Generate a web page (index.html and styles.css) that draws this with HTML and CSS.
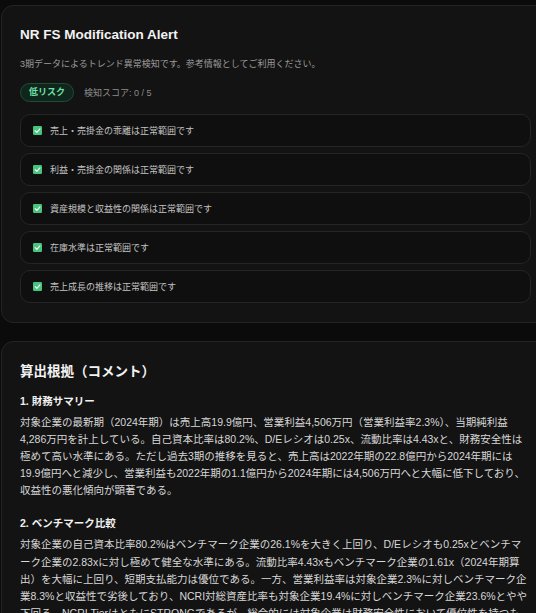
FILE: index.html
```html
<!DOCTYPE html>
<html lang="ja">
<head>
    <meta charset="UTF-8">
    <meta name="viewport" content="width=device-width, initial-scale=1.0">
    <title>NR FS Modification Alert</title>
    <link rel="stylesheet" href="styles.css">
</head>
<body>
    <div class="page">
        <section class="card">
            <h1>NR FS Modification Alert</h1>
            <p class="lead">3期データによるトレンド異常検知です。参考情報としてご利用ください。</p>
            <div class="status">
                <span class="badge">低リスク</span>
                <span class="score">検知スコア: 0 / 5</span>
            </div>
            <ul class="checks">
                <li>
                    <svg class="tick" viewBox="0 0 10 10"><rect width="10" height="10" rx="1.5"/><path d="M2.4 5.2 L4.3 7 L7.7 3.2"/></svg>
                    売上・売掛金の乖離は正常範囲です
                </li>
                <li>
                    <svg class="tick" viewBox="0 0 10 10"><rect width="10" height="10" rx="1.5"/><path d="M2.4 5.2 L4.3 7 L7.7 3.2"/></svg>
                    利益・売掛金の関係は正常範囲です
                </li>
                <li>
                    <svg class="tick" viewBox="0 0 10 10"><rect width="10" height="10" rx="1.5"/><path d="M2.4 5.2 L4.3 7 L7.7 3.2"/></svg>
                    資産規模と収益性の関係は正常範囲です
                </li>
                <li>
                    <svg class="tick" viewBox="0 0 10 10"><rect width="10" height="10" rx="1.5"/><path d="M2.4 5.2 L4.3 7 L7.7 3.2"/></svg>
                    在庫水準は正常範囲です
                </li>
                <li>
                    <svg class="tick" viewBox="0 0 10 10"><rect width="10" height="10" rx="1.5"/><path d="M2.4 5.2 L4.3 7 L7.7 3.2"/></svg>
                    売上成長の推移は正常範囲です
                </li>
            </ul>
        </section>

        <section class="card comment">
            <h2>算出根拠（コメント）</h2>
            <h3>1. 財務サマリー</h3>
            <p class="body">対象企業の最新期（2024年期）は売上高19.9億円、営業利益4,506万円（営業利益率2.3%）、当期純利益4,286万円を計上している。自己資本比率は80.2%、D/Eレシオは0.25x、流動比率は4.43xと、財務安全性は極めて高い水準にある。ただし過去3期の推移を見ると、売上高は2022年期の22.8億円から2024年期には19.9億円へと減少し、営業利益も2022年期の1.1億円から2024年期には4,506万円へと大幅に低下しており、収益性の悪化傾向が顕著である。</p>
            <h3>2. ベンチマーク比較</h3>
            <p class="body">対象企業の自己資本比率80.2%はベンチマーク企業の26.1%を大きく上回り、D/Eレシオも0.25xとベンチマーク企業の2.83xに対し極めて健全な水準にある。流動比率4.43xもベンチマーク企業の1.61x（2024年期算出）を大幅に上回り、短期支払能力は優位である。一方、営業利益率は対象企業2.3%に対しベンチマーク企業8.3%と収益性で劣後しており、NCRI対総資産比率も対象企業19.4%に対しベンチマーク企業23.6%とやや下回る。NCRI TierはともにSTRONGであるが、総合的には対象企業は財務安全性において優位性を持つも、収益性の改善が課題である。</p>
        </section>
    </div>
</body>
</html>
```

FILE: styles.css
```css
html, body {
    margin: 0;
    padding: 0;
    overflow: hidden;
}
body {
    font-family: "Liberation Sans", "Noto Sans CJK JP", sans-serif;
    background-color: #0b0b0b;
    color: #d6d6d6;
}
.page {
    width: 549px;
    padding: 5px 0 0 1px;
}
.card {
    background-color: #131313;
    border: 1px solid #232323;
    border-radius: 12px;
    padding: 20px 18px 19px 18px;
    margin-bottom: 18px;
}
h1 {
    font-size: 13.5px;
    line-height: 17.5px;
    font-weight: bold;
    color: #f2f2f2;
    margin: 0;
}
.lead {
    font-size: 9px;
    line-height: 13px;
    color: #9a9a9a;
    margin: 14px 0 0;
}
.status {
    display: flex;
    align-items: center;
    gap: 10px;
    margin-top: 12px;
}
.badge {
    font-size: 9px;
    line-height: 17px;
    font-weight: bold;
    color: #72e0a6;
    background-color: #0e261b;
    border: 1px solid #1d4d35;
    border-radius: 10px;
    padding: 0 8px;
}
.score {
    font-size: 9px;
    color: #8c8c8c;
}
.checks {
    list-style: none;
    margin: 12px 0 0;
    padding: 0;
    display: flex;
    flex-direction: column;
    gap: 6px;
}
.checks li {
    display: flex;
    align-items: center;
    gap: 8px;
    height: 31px;
    padding: 0 12px;
    background-color: #0f0f0f;
    border: 1px solid #252525;
    border-radius: 10px;
    font-size: 9px;
    color: #c2c2c2;
}
.tick {
    width: 9px;
    height: 9px;
    flex-shrink: 0;
}
.tick rect {
    fill: #49c47f;
}
.tick path {
    fill: none;
    stroke: #f4fff8;
    stroke-width: 1.3;
    stroke-linecap: round;
    stroke-linejoin: round;
}
.comment {
    padding-top: 21px;
}
h2 {
    font-size: 13.5px;
    line-height: 17.5px;
    font-weight: bold;
    color: #f2f2f2;
    margin: 0;
}
h3 {
    font-size: 10.5px;
    line-height: 17px;
    font-weight: bold;
    color: #f0f0f0;
    margin: 13px 0 4px;
}
.body {
    font-size: 10.5px;
    line-height: 17.1px;
    color: #d8d8d8;
    margin: 0;
}
.body + h3 {
    margin-top: 16px;
}
```
